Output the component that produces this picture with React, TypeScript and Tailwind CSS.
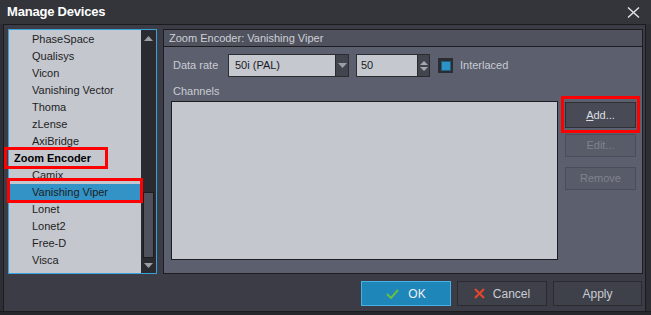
import React from "react";

const devices: { name: string; group?: boolean; selected?: boolean }[] = [
  { name: "PhaseSpace" },
  { name: "Qualisys" },
  { name: "Vicon" },
  { name: "Vanishing Vector" },
  { name: "Thoma" },
  { name: "zLense" },
  { name: "AxiBridge" },
  { name: "Zoom Encoder", group: true },
  { name: "Camix" },
  { name: "Vanishing Viper", selected: true },
  { name: "Lonet" },
  { name: "Lonet2" },
  { name: "Free-D" },
  { name: "Visca" },
];

function Tri({ down, className }: { down?: boolean; className?: string }) {
  return (
    <svg width="9" height="5" viewBox="0 0 9 5" className={className}>
      {down ? <polygon points="0,0 9,0 4.5,5" fill="#9c9ea7" /> : <polygon points="0,5 9,5 4.5,0" fill="#9c9ea7" />}
    </svg>
  );
}

export default function App() {
  return (
    <div className="relative w-[651px] h-[315px] flex flex-col bg-[#2e2f35] font-['Liberation_Sans',Arial,sans-serif] overflow-hidden select-none">
      {/* title bar */}
      <div className="h-[24px] flex items-center justify-between pl-[7px] pr-[11px] bg-[#33353b]">
        <span className="text-[13px] font-bold tracking-[-0.2px] text-white">Manage Devices</span>
        <svg width="13" height="11" viewBox="0 0 13 11">
          <path d="M1 0.5 L12 10.5 M12 0.5 L1 10.5" stroke="#e4e5e8" strokeWidth="1.4" />
        </svg>
      </div>

      {/* body */}
      <div className="flex-1 mx-[3px] mr-[5px] border-t border-x border-[#1b1c20] bg-[#3c3c46] flex flex-col pt-[4px] pl-[4px] pr-[2px]">
        <div className="h-[245px] flex gap-[6px]">
          {/* device list */}
          <div className="w-[149px] border border-[#3aa2da] bg-[#c4c7ce] flex">
            <div className="flex-1 flex flex-col pt-[1px] text-[11px] text-[#1e1e24]">
              {devices.map((d) => (
                <div
                  key={d.name}
                  className={
                    d.selected
                      ? "h-[17px] flex items-center pl-[23px] bg-[#3393c6]"
                      : d.group
                      ? "h-[17px] flex items-center pl-[5px] font-bold text-black"
                      : "h-[17px] flex items-center pl-[23px]"
                  }
                >
                  {d.name}
                </div>
              ))}
            </div>
            <div className="w-[15px] bg-[#2a2b30] flex flex-col">
              <div className="h-[16px] flex items-center justify-center">
                <Tri />
              </div>
              <div className="flex-1 flex flex-col justify-end px-[2px]">
                <div className="h-[66px] bg-[#4f525c] border border-[#1c1d21]" />
              </div>
              <div className="h-[15px] flex items-center justify-center">
                <Tri down />
              </div>
            </div>
          </div>

          {/* device panel */}
          <div className="w-[480px] border border-[#1c1d21] bg-[#5c5f6d] flex flex-col">
            <div className="h-[17px] flex items-center pl-[5px] bg-[#50535e] border-b border-[#1c1d21] text-[11px] text-[#cdd0d8]">
              Zoom Encoder: Vanishing Viper
            </div>
            <div className="flex-1 flex flex-col pt-[7px] pl-[7px] pr-[6px]">
              <div className="h-[23px] flex items-center text-[11px] text-[#c9ccd4]">
                <span className="w-[57px] pl-[2px]">Data rate</span>
                <div className="w-[121px] h-[23px] flex border border-[#2b2c31] bg-[#c5c8cf]">
                  <span className="flex-1 flex items-center pl-[6px] text-[#1b1b1f]">50i (PAL)</span>
                  <div className="w-[13px] bg-[#43454e] border-l border-[#2b2c31] flex items-center justify-center">
                    <Tri down />
                  </div>
                </div>
                <div className="ml-[7px] w-[74px] h-[23px] flex border border-[#2b2c31] bg-[#c5c8cf]">
                  <span className="flex-1 flex items-center pl-[4px] text-[#1b1b1f]">50</span>
                  <div className="w-[12px] bg-[#43454e] border-l border-[#2b2c31] flex flex-col items-center justify-center gap-[2px]">
                    <svg width="8" height="4" viewBox="0 0 8 4">
                      <polygon points="0,4 8,4 4,0" fill="#a6a8b0" />
                    </svg>
                    <svg width="8" height="4" viewBox="0 0 8 4">
                      <polygon points="0,0 8,0 4,4" fill="#a6a8b0" />
                    </svg>
                  </div>
                </div>
                <div className="ml-[8px] w-[15px] h-[15px] bg-[#2b2d33] flex items-center justify-center">
                  <div className="w-[10px] h-[10px] bg-[#2d93c6] border border-[#1f5f80]" />
                </div>
                <span className="ml-[7px]">Interlaced</span>
              </div>

              <div className="mt-[7px] h-[14px] flex items-center pl-[2px] text-[11px] text-[#c9ccd4]">Channels</div>

              <div className="mt-[3px] flex gap-[7px]">
                <div className="w-[387px] h-[159px] bg-[#c4c7ce] border border-[#1c1d21]" />
                <div className="w-[71px] flex flex-col text-[11px]">
                  <div className="mt-[1px] h-[26px] flex items-center justify-center bg-[#484b55] border border-[#2e3036] text-[#dcdde2]">
                    <span>
                      <span className="underline">A</span>dd...
                    </span>
                  </div>
                  <div className="mt-[6px] h-[23px] flex items-center justify-center bg-[#585b68] border border-[#4b4e59] text-[#80838e]">
                    Edit...
                  </div>
                  <div className="mt-[10px] h-[23px] flex items-center justify-center bg-[#585b68] border border-[#4b4e59] text-[#80838e]">
                    Remove
                  </div>
                </div>
              </div>
            </div>
          </div>
        </div>

        {/* dialog buttons */}
        <div className="mt-[7px] h-[25px] flex justify-end gap-[6px] pr-[1px] text-[11px]">
          <div className="w-[90px] flex items-center justify-center gap-[9px] bg-[#1f86b9] border border-[#47b1e5] text-[#eef0f3]">
            <svg width="13" height="10" viewBox="0 0 13 10">
              <path d="M1 5 L5 9 L12 1" stroke="#63c043" strokeWidth="2" fill="none" />
            </svg>
            <span className="text-[12px]">OK</span>
          </div>
          <div className="w-[90px] flex items-center justify-center gap-[8px] bg-[#3f414a] border border-[#2a2b30] text-[#c9ccd3]">
            <svg width="11" height="11" viewBox="0 0 11 11">
              <path d="M1 1 L10 10 M10 1 L1 10" stroke="#e8452b" strokeWidth="2" />
            </svg>
            <span className="text-[12px]">Cancel</span>
          </div>
          <div className="w-[89px] flex items-center justify-center bg-[#3f414a] border border-[#2a2b30] text-[#c9ccd3]">
            <span className="text-[12px]">Apply</span>
          </div>
        </div>
      </div>

      {/* bottom frame */}
      <div className="h-[4px] border-t border-[#1b1c20] bg-[#26272c]" />

      {/* annotation boxes */}
      <div className="absolute left-[4px] top-[147px] w-[104px] h-[22px] border-[3px] border-[#ff0000]" />
      <div className="absolute left-[7px] top-[178px] w-[136px] h-[25px] border-[3px] border-[#ff0000]" />
      <div className="absolute left-[561px] top-[96px] w-[79px] h-[37px] border-[3px] border-[#ff0000]" />
    </div>
  );
}
